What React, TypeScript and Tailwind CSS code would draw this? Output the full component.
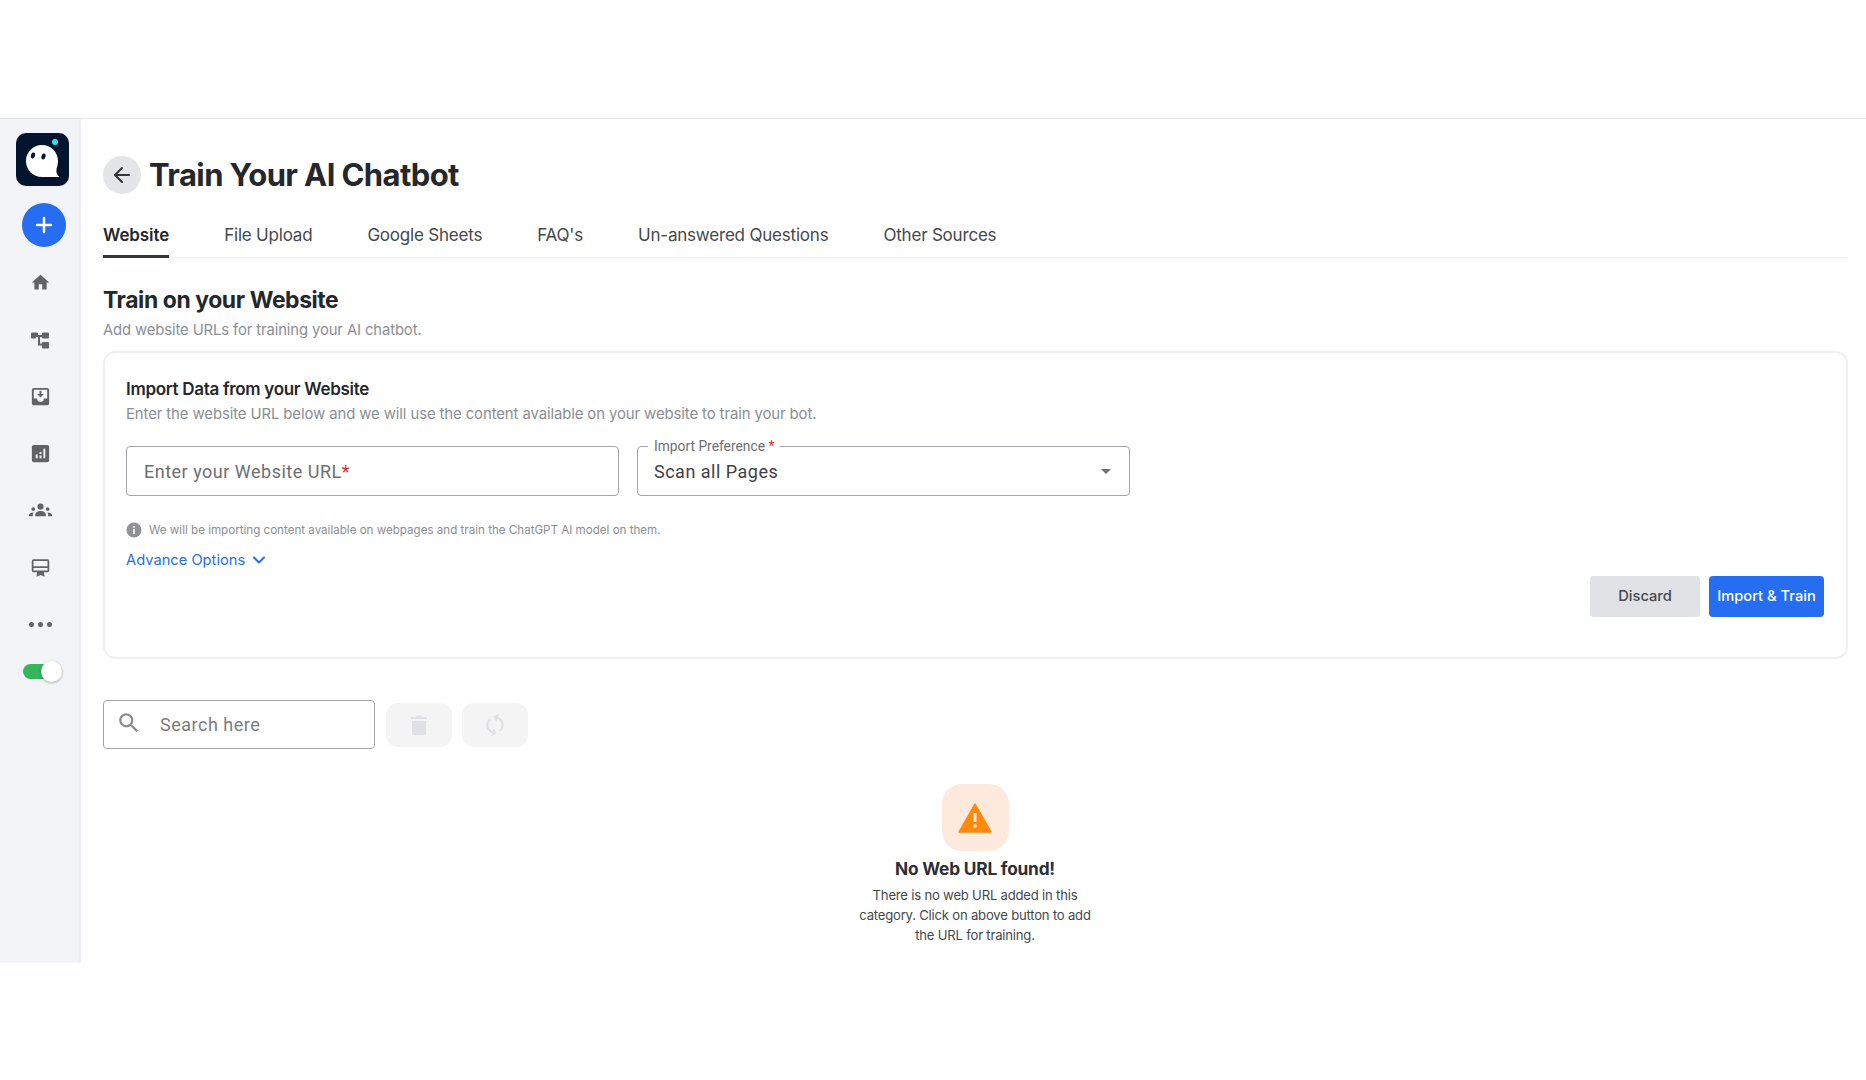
import { ArrowLeft, ChevronDown } from 'lucide-react';
import { ReactNode } from 'react';

const TABS = ['Website', 'File Upload', 'Google Sheets', "FAQ's", 'Un-answered Questions', 'Other Sources'];

const Glyph = ({ children, size = 21 }: { children: ReactNode; size?: number }) => (
  <svg width={size} height={size} viewBox="0 0 24 24" fill="#616366">
    {children}
  </svg>
);

const NAV_ICONS: ReactNode[] = [
  <Glyph key="home">
    <path d="M10 20v-6h4v6h5v-8h3L12 3 2 12h3v8z" />
  </Glyph>,
  <Glyph key="flow" size={24}>
    <path d="M3 5.5a1 1 0 0 1 1-1h5a1 1 0 0 1 1 1V7h4V5.500a1 1 0 0 1 1-1h5a1 1 0 0 1 1 1v4a1 1 0 0 1-1 1h-5a1 1 0 0 1-1-1V9h-2v6.500h2V15a1 1 0 0 1 1-1h5a1 1 0 0 1 1 1v4.500a1 1 0 0 1-1 1h-5a1 1 0 0 1-1-1v-2h-4V9h-2v.5a1 1 0 0 1-1 1H4a1 1 0 0 1-1-1z" />
  </Glyph>,
  <Glyph key="inbox" size={23}>
    <path
      fillRule="evenodd"
      d="M5 3h14a2 2 0 0 1 2 2v14a2 2 0 0 1-2 2H5a2 2 0 0 1-2-2V5a2 2 0 0 1 2-2zm0 2v9h3.500a3.500 3.500 0 0 0 7 0H19V5z"
    />
    <path d="M11 6v3.500H8.500L12 13l3.500-3.500H13V6z" />
  </Glyph>,
  <Glyph key="analytics" size={23}>
    <path
      fillRule="evenodd"
      d="M5 3h14a2 2 0 0 1 2 2v14a2 2 0 0 1-2 2H5a2 2 0 0 1-2-2V5a2 2 0 0 1 2-2zm10 4v10h2V7zm-4 7v3h2v-3zm0-3.500v2h2v-2zM7 13v4h2v-4z"
    />
  </Glyph>,
  <Glyph key="group" size={23}>
    <circle cx="12" cy="8" r="3.200" />
    <path d="M6.500 18v-1.500c0-2.500 2.500-4 5.500-4s5.500 1.500 5.500 4V18z" />
    <circle cx="4.500" cy="10.500" r="2" />
    <circle cx="19.500" cy="10.500" r="2" />
    <path d="M0 18v-1.200c0-1.800 1.800-2.800 4.800-2.800-.5.800-.8 1.600-.8 2.500V18zM24 18v-1.200c0-1.800-1.800-2.800-4.800-2.800.5.800.8 1.600.8 2.500V18z" />
  </Glyph>,
  <Glyph key="card">
    <path
      fillRule="evenodd"
      d="M4 2.500h16a2 2 0 0 1 2 2v11a2 2 0 0 1-2 2h-4l.5 5-4.500-2-4.500 2 .5-5H4a2 2 0 0 1-2-2v-11a2 2 0 0 1 2-2zm0 2v6h16v-6zm0 8v3h16v-3z"
    />
  </Glyph>,
];

function Sidebar() {
  return (
    <aside className="flex h-full w-[81px] shrink-0 flex-col border-r-2 border-[#eceef1] bg-[#f2f4f7]">
      <div className="mt-[14px] ml-4 h-[53px] w-[53px] rounded-[10px] bg-[#03142f]">
        <svg width="53" height="53" viewBox="0 0 53 53">
          <path d="M26 12C17 12 10 19 10 28S17 44 26 44H43.500C41 42 40 40 40.500 36 41.500 33 42 30 42 28 42 19 35 12 26 12z" fill="#fff" />
          <ellipse cx="17" cy="22.500" rx="2" ry="3" fill="#03142f" transform="rotate(15 17 22.500)" />
          <ellipse cx="27.500" cy="23.500" rx="2" ry="3" fill="#03142f" transform="rotate(15 27.500 23.500)" />
          <circle cx="39" cy="9" r="3" fill="#2be3e8" />
        </svg>
      </div>
      <div className="mt-[17px] ml-[22px] flex h-11 w-11 items-center justify-center rounded-full bg-[#256ef1]">
        <svg width="18" height="18" viewBox="0 0 18 18" stroke="#fff" strokeWidth="2.500" strokeLinecap="round">
          <path d="M9 2v14M2 9h14" />
        </svg>
      </div>
      <div className="mt-[7px] flex flex-col items-center pl-px">
        {NAV_ICONS.map((icon, i) => (
          <div key={i} className="flex h-[57px] w-full items-center justify-center">
            {icon}
          </div>
        ))}
        <div className="flex h-[57px] w-full items-center justify-center gap-[4px]">
          <span className="h-[5px] w-[5px] rounded-full bg-[#616366]" />
          <span className="h-[5px] w-[5px] rounded-full bg-[#616366]" />
          <span className="h-[5px] w-[5px] rounded-full bg-[#616366]" />
        </div>
      </div>
      <div className="relative mt-[11px] ml-[23px] h-[15px] w-[33px] rounded-full bg-[#34b65a]">
        <span className="absolute -top-[3px] -right-[6px] h-[21px] w-[21px] rounded-full bg-white shadow-[0_1px_3px_rgba(0,0,0,0.3)]" />
      </div>
    </aside>
  );
}

function ImportCard() {
  return (
    <section className="mt-[9px] flex h-[308px] flex-col rounded-xl border-2 border-[#eef0f2] px-[21px] pt-[24px]">
      <h3 className="text-[17px] leading-[24px] font-semibold tracking-[-0.3px] text-[#24272b]">Import Data from your Website</h3>
      <p className="mt-px text-[14.900px] leading-[24px] tracking-[-0.1px] text-[#8b8e93]">
        Enter the website URL below and we will use the content available on your website to train your bot.
      </p>
      <div className="mt-[20px] flex gap-[18px] font-['Roboto',sans-serif]">
        <div className="flex h-[50px] w-[493px] items-center rounded border border-[#a3a5a8] px-[17px] text-[18px] tracking-[0.5px] text-[#6d6f72]">
          Enter your Website URL<span className="text-[#d32f2f]">*</span>
        </div>
        <div className="relative flex h-[50px] w-[493px] items-center justify-between rounded border border-[#a3a5a8] pr-[18px] pl-[16px] text-[18px] tracking-[0.5px] text-[#3f4144]">
          <span className="absolute -top-[9px] left-[10px] bg-white px-[6px] text-[13.800px] leading-[16px] tracking-normal text-[#6d6f72]">
            Import Preference <span className="text-[#d32f2f]">*</span>
          </span>
          <span>Scan all Pages</span>
          <span className="h-0 w-0 border-x-[5px] border-t-[5px] border-x-transparent border-t-[#6d6f72]" />
        </div>
      </div>
      <div className="mt-[25px] flex items-center gap-[7px] text-[11.600px] leading-[18px] text-[#8b8e93]">
        <svg width="16" height="16" viewBox="0 0 16 16">
          <circle cx="8" cy="8" r="7.500" fill="#8f9194" />
          <path d="M7.200 7h1.600v5H7.200zM7.200 4h1.600v1.700H7.200z" fill="#fff" />
        </svg>
        We will be importing content available on webpages and train the ChatGPT AI model on them.
      </div>
      <div className="mt-[11px] flex items-center gap-[4px] text-[14.700px] leading-[20px] text-[#2a6ee8]">
        Advance Options
        <ChevronDown size={20} strokeWidth={2.500} />
      </div>
      <div className="mt-[6px] mr-px flex justify-end gap-[9px] text-[14.700px] font-medium">
        <button className="h-[41px] w-[110px] rounded bg-[#e0e2e6] text-[#45484c]">Discard</button>
        <button className="h-[41px] w-[115px] rounded bg-[#256ef1] text-white">Import &amp; Train</button>
      </div>
    </section>
  );
}

export default function App() {
  return (
    <div className="flex h-[1080px] w-full flex-col overflow-hidden bg-white font-['Inter',sans-serif]">
      <header className="h-[119px] shrink-0 border-b border-[#e4e6e9]" />
      <div className="flex h-[844px] shrink-0">
        <Sidebar />
        <main className="flex-1 pt-[37px] pr-[18px] pl-[22px]">
          <div className="flex items-center gap-[8px]">
            <div className="flex h-[38px] w-[38px] items-center justify-center rounded-full bg-[#e3e5e9]">
              <ArrowLeft size={24} strokeWidth={2} color="#33363a" />
            </div>
            <h1 className="text-[31px] leading-[38px] font-bold tracking-[-0.6px] text-[#24272b]">Train Your AI Chatbot</h1>
          </div>
          <nav className="mt-[22px] flex h-[42px] gap-[55px] border-b border-[#f0f1f3] text-[17px]">
            {TABS.map((t, i) => (
              <div
                key={t}
                className={
                  i === 0
                    ? '-mb-px border-b-[3px] border-[#33363a] pt-[7px] font-semibold tracking-[-0.1px] text-[#24272b]'
                    : 'pt-[7px] tracking-[-0.2px] text-[#45484c]'
                }
              >
                {t}
              </div>
            ))}
          </nav>
          <h2 className="mt-[27px] text-[22.900px] leading-[30px] font-bold tracking-[-0.4px] text-[#24272b]">Train on your Website</h2>
          <p className="mt-[3px] text-[14.800px] leading-[24px] tracking-[-0.1px] text-[#8b8e93]">Add website URLs for training your AI chatbot.</p>
          <ImportCard />
          <div className="mt-[41px] flex items-center">
            <div className="flex h-[49px] w-[272px] items-center rounded border border-[#a3a5a8] pl-[12px] font-['Roboto',sans-serif] text-[18px] tracking-[0.5px] text-[#7b7d80]">
              <svg width="26" height="26" viewBox="0 0 24 24" fill="#8a8c8f" className="-mt-[3px]">
                <path d="M15.500 14h-.79l-.28-.27C15.410 12.590 16 11.110 16 9.500 16 5.910 13.090 3 9.500 3S3 5.910 3 9.500 5.910 16 9.500 16c1.610 0 3.090-.59 4.230-1.570l.27.28v.79l5 4.990L20.490 19l-4.990-5zm-6 0C7.010 14 5 11.990 5 9.500S7.010 5 9.500 5 14 7.010 14 9.500 11.990 14 9.500 14z" />
              </svg>
              <span className="ml-[18px]">Search here</span>
            </div>
            <div className="ml-[11px] flex h-[44px] w-[66px] items-center justify-center rounded-xl bg-[#f4f4f5]">
              <svg width="18" height="22" viewBox="0 0 18 22" fill="#dfe1e5">
                <path d="M1 3h5l1-1.500h4L12 3h5v2H1zM2 7h14v12a2 2 0 0 1-2 2H4a2 2 0 0 1-2-2z" />
              </svg>
            </div>
            <div className="ml-[10px] flex h-[44px] w-[66px] items-center justify-center rounded-xl bg-[#f4f4f5]">
              <svg width="26" height="26" viewBox="0 0 24 24" fill="#dfe1e5" className="rotate-[20deg]">
                <path d="M12 4V1L8 5l4 4V6c3.310 0 6 2.690 6 6 0 1.010-.25 1.970-.7 2.800l1.460 1.460C19.540 15.030 20 13.570 20 12c0-4.420-3.580-8-8-8zm0 14c-3.310 0-6-2.690-6-6 0-1.010.25-1.970.7-2.800L5.240 7.740C4.460 8.970 4 10.430 4 12c0 4.420 3.580 8 8 8v3l4-4-4-4v3z" />
              </svg>
            </div>
          </div>
          <div className="mt-[35px] flex flex-col items-center pr-px">
            <div className="flex h-[67px] w-[67px] items-center justify-center rounded-[20px] bg-[#fdeadd]">
              <svg width="34" height="30" viewBox="0 0 34 30">
                <path d="M17 1 33 29H1z" fill="#ff8a0a" stroke="#ff8a0a" strokeWidth="1.500" strokeLinejoin="round" />
                <path d="M15.500 10h3v9h-3zM15.500 21.500h3v3h-3z" fill="#fdeadd" />
              </svg>
            </div>
            <h4 className="mt-[6px] text-[17.300px] leading-[24px] font-bold tracking-[-0.2px] text-[#2c2f33]">No Web URL found!</h4>
            <p className="mt-[4px] w-[240px] text-center text-[13.100px] leading-[20px] tracking-[-0.2px] text-[#45484c]">
              There is no web URL added in this category. Click on above button to add the URL for training.
            </p>
          </div>
        </main>
      </div>
    </div>
  );
}
